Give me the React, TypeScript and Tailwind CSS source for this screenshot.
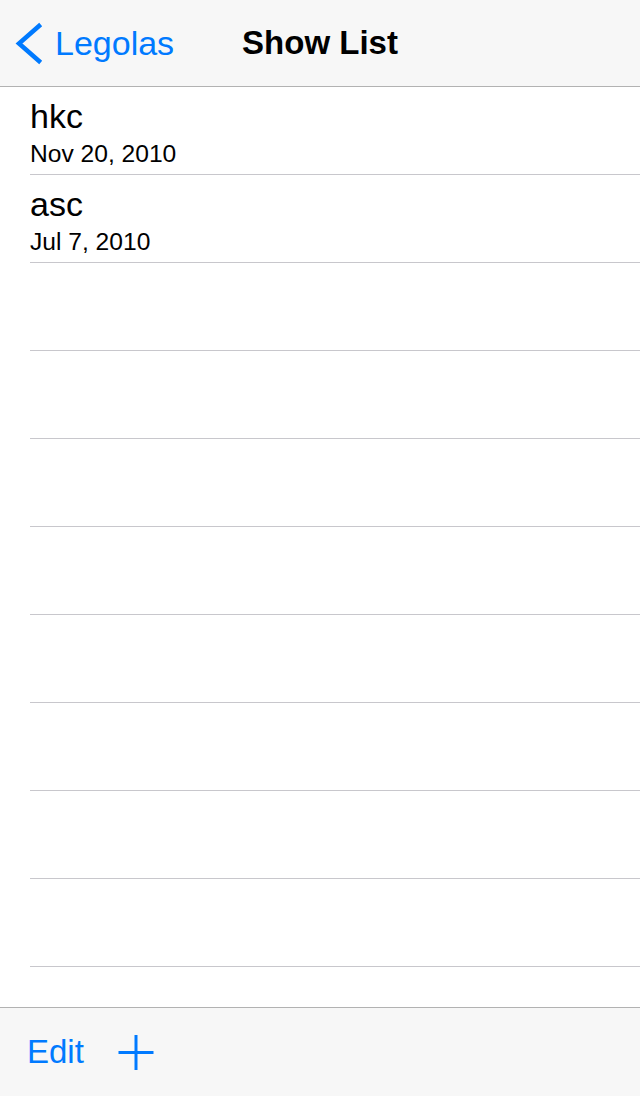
import React from "react";

const rows = [
  { title: "hkc", date: "Nov 20, 2010" },
  { title: "asc", date: "Jul 7, 2010" },
  null, null, null, null, null, null, null, null,
];

export default function App() {
  return (
    <div
      className="w-[640px] h-[1096px] bg-white flex flex-col overflow-hidden"
      style={{ fontFamily: '"Liberation Sans", Arial, sans-serif' }}
    >
      <div className="h-[87px] shrink-0 bg-[#f7f7f7] border-b border-[#b2b2b2] grid grid-cols-[1fr_auto_1fr] items-start">
        <div className="flex items-start pt-[23px]">
          <svg width="44" height="60" viewBox="0 0 44 60" className="ml-[2px] -mt-[2px]">
            <polyline
              points="37,5 17,22.5 37,40"
              fill="none"
              stroke="#007aff"
              strokeWidth="4.5"
              strokeLinecap="square"
            />
          </svg>
          <span className="ml-[9px] text-[34px] leading-[40px] text-[#007aff]">Legolas</span>
        </div>
        <div className="pt-[23px] text-[33px] leading-[40px] font-bold text-black">Show List</div>
        <div />
      </div>
      <div className="flex-1 flex flex-col">
        {rows.map((r, i) => (
          <div key={i} className="ml-[30px] h-[88px] shrink-0 border-b border-[#c8c7cc] flex flex-col">
            {r && (
              <>
                <div className="pt-[9px] text-[34px] leading-[40px] text-black">{r.title}</div>
                <div className="text-[24.6px] leading-[28px] text-black mt-[4px]">{r.date}</div>
              </>
            )}
          </div>
        ))}
      </div>
      <div className="h-[89px] shrink-0 bg-[#f7f7f7] border-t border-[#b2b2b2] flex items-start">
        <span className="ml-[27px] mt-[24px] text-[33px] leading-[40px] text-[#007aff]">Edit</span>
        <svg width="40" height="40" viewBox="0 0 40 40" className="ml-[32px] mt-[25px]">
          <line x1="20" y1="2" x2="20" y2="37" stroke="#007aff" strokeWidth="3" />
          <line x1="2.5" y1="19.5" x2="37.5" y2="19.5" stroke="#007aff" strokeWidth="3" />
        </svg>
      </div>
    </div>
  );
}
